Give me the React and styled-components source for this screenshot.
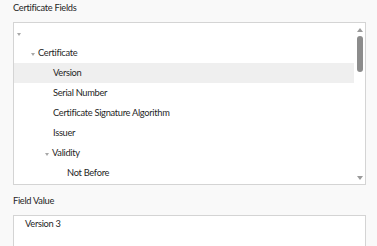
import React from "react";
import styled, { createGlobalStyle } from "styled-components";

const GlobalStyle = createGlobalStyle`
  html, body {
    margin: 0;
    padding: 0;
    background: #f9f9f9;
  }
  body {
    font-family: Lato, "Open Sans", sans-serif;
    color: #1f1f1f;
    letter-spacing: -0.3px;
  }
`;

const rows = [
  { label: "", depth: 0, open: true },
  { label: "Certificate", depth: 1, open: true },
  { label: "Version", depth: 2, selected: true },
  { label: "Serial Number", depth: 2 },
  { label: "Certificate Signature Algorithm", depth: 2 },
  { label: "Issuer", depth: 2 },
  { label: "Validity", depth: 2, open: true },
  { label: "Not Before", depth: 3 },
];

function App() {
  return (
    <Page>
      <GlobalStyle />
      <Label>Certificate Fields</Label>
      <TreeBox>
        <TreeList>
          {rows.map((r, i) => (
            <Row key={i} $depth={r.depth} $selected={r.selected}>
              {r.open && <Caret />}
              <span>{r.label}</span>
            </Row>
          ))}
        </TreeList>
        <ScrollBar>
          <ArrowUp />
          <Thumb />
          <Track />
          <ArrowDown />
        </ScrollBar>
      </TreeBox>
      <Label $top={10} $height={30}>Field Value</Label>
      <ValueBox>Version 3</ValueBox>
    </Page>
  );
}

export default App;

const Page = styled.div`
  width: 377px;
  height: 246px;
  overflow: hidden;
  padding: 0 11px 0 13px;
  box-sizing: border-box;
`;

const Label = styled.div`
  font-size: 9.3px;
  line-height: 12px;
  padding-top: ${(p) => (p.$top ? p.$top : 2)}px;
  height: ${(p) => (p.$height ? p.$height : 22)}px;
  box-sizing: border-box;
`;

const TreeBox = styled.div`
  display: flex;
  height: 163px;
  background: #fff;
  border: 1px solid #d4d4d4;
  box-sizing: border-box;
`;

const TreeList = styled.div`
  flex: 1;
`;

const Row = styled.div`
  height: 20px;
  display: flex;
  align-items: center;
  font-size: 9.3px;
  line-height: 20px;
  padding-left: ${(p) => 11 + p.$depth * 14}px;
  background: ${(p) => (p.$selected ? "#efefef" : "transparent")};
`;

const Caret = styled.span`
  width: 0;
  height: 0;
  margin-left: -8px;
  margin-right: 3px;
  margin-top: 2px;
  border-left: 2.5px solid transparent;
  border-right: 2.5px solid transparent;
  border-top: 3px solid #a8a8a8;
`;

const ScrollBar = styled.div`
  width: 11px;
  display: flex;
  flex-direction: column;
  align-items: center;
  padding: 5px 0 4px;
  box-sizing: border-box;
`;

const ArrowUp = styled.div`
  width: 0;
  height: 0;
  border-left: 3px solid transparent;
  border-right: 3px solid transparent;
  border-bottom: 4px solid #9a9a9a;
`;

const ArrowDown = styled.div`
  width: 0;
  height: 0;
  border-left: 3px solid transparent;
  border-right: 3px solid transparent;
  border-top: 4px solid #9a9a9a;
`;

const Thumb = styled.div`
  width: 6px;
  height: 36px;
  margin-top: 4px;
  border-radius: 3px;
  background: #8c8c8c;
`;

const Track = styled.div`
  flex: 1;
`;

const ValueBox = styled.div`
  height: 60px;
  background: #fff;
  border: 1px solid #d4d4d4;
  border-bottom: none;
  box-sizing: border-box;
  font-size: 9.3px;
  padding: 2px 0 0 11px;
`;
